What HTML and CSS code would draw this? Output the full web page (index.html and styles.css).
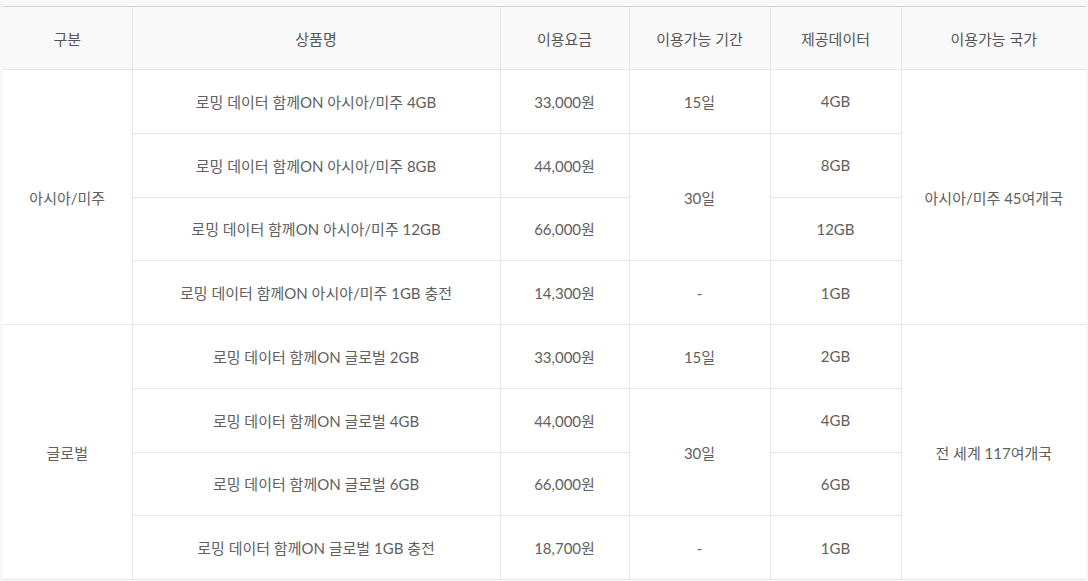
FILE: index.html
```html
<!DOCTYPE html>
<html lang="ko">
<head>
<meta charset="utf-8">
<link rel="stylesheet" href="styles.css">
</head>
<body>
<table class="plan">
  <colgroup>
    <col class="c1"><col class="c2"><col class="c3"><col class="c4"><col class="c5"><col class="c6">
  </colgroup>
  <thead>
    <tr><th>구분</th><th>상품명</th><th>이용요금</th><th>이용가능 기간</th><th>제공데이터</th><th>이용가능 국가</th></tr>
  </thead>
  <tbody>
    <tr><td rowspan="4">아시아/미주</td><td>로밍 데이터 함께ON 아시아/미주 4GB</td><td>33,000원</td><td>15일</td><td>4GB</td><td rowspan="4">아시아/미주 45여개국</td></tr>
    <tr><td>로밍 데이터 함께ON 아시아/미주 8GB</td><td>44,000원</td><td rowspan="2">30일</td><td>8GB</td></tr>
    <tr><td>로밍 데이터 함께ON 아시아/미주 12GB</td><td>66,000원</td><td>12GB</td></tr>
    <tr><td>로밍 데이터 함께ON 아시아/미주 1GB 충전</td><td>14,300원</td><td>-</td><td>1GB</td></tr>
    <tr><td rowspan="4">글로벌</td><td>로밍 데이터 함께ON 글로벌 2GB</td><td>33,000원</td><td>15일</td><td>2GB</td><td rowspan="4">전 세계 117여개국</td></tr>
    <tr><td>로밍 데이터 함께ON 글로벌 4GB</td><td>44,000원</td><td rowspan="2">30일</td><td>4GB</td></tr>
    <tr><td>로밍 데이터 함께ON 글로벌 6GB</td><td>66,000원</td><td>6GB</td></tr>
    <tr><td>로밍 데이터 함께ON 글로벌 1GB 충전</td><td>18,700원</td><td>-</td><td>1GB</td></tr>
  </tbody>
</table>
</body>
</html>
```
FILE: styles.css
```css
html, body {
  margin: 0;
  background: #f8f8f8;
}
body {
  padding: 6px 0 0 3px;
  font-family: Lato, "Noto Sans CJK KR", sans-serif;
  font-size: 15px;
  color: #606060;
}
.plan {
  width: 1083px;
  border-collapse: collapse;
  table-layout: fixed;
  background: #fff;
  border-top: 1px solid #cfcfcf;
  border-bottom: 1px solid #e2e2e2;
}
.c1 { width: 129px; }
.c2 { width: 368px; }
.c3 { width: 129px; }
.c4 { width: 141px; }
.c5 { width: 131px; }
.c6 { width: 185px; }
.plan th, .plan td {
  border-left: 1px solid #e6e6e6;
  border-bottom: 1px solid #e6e6e6;
  text-align: center;
  vertical-align: middle;
  padding: 0;
  font-weight: normal;
}
.plan th:first-child, .plan tbody tr:nth-child(4n+1) td:first-child {
  border-left: none;
}
.plan th {
  height: 62px;
  background: #f9f9f9;
  color: #555;
}
.plan td {
  height: 62.75px;
}
```
